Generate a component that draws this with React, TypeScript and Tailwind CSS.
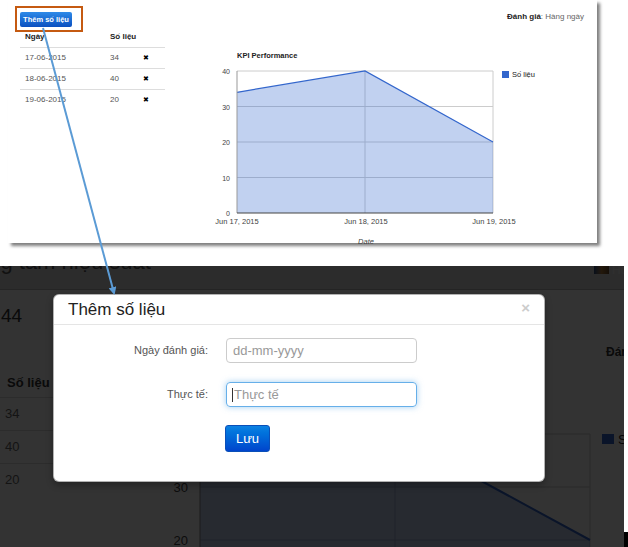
import React from "react";

const rows = [
  { date: "17-06-2015", value: 34 },
  { date: "18-06-2015", value: 40 },
  { date: "19-06-2015", value: 20 },
];

function KpiChart() {
  // origin sits at page (200,45)
  const gridY = [26, 61.5, 97, 132.5];
  return (
    <svg width="360" height="205" className="block" fontFamily="'Liberation Sans', Arial, sans-serif">
      <text x="37" y="13" fontSize="7.5" fontWeight="bold" fill="#222">KPI Performance</text>
      {gridY.map((y) => (
        <line key={y} x1="37" x2="293" y1={y} y2={y} stroke="#cccccc" strokeWidth="1" />
      ))}
      <line x1="165" x2="165" y1="26" y2="168" stroke="#cccccc" strokeWidth="1" />
      <line x1="293" x2="293" y1="26" y2="168" stroke="#cccccc" strokeWidth="1" />
      <polygon points="37,168 37,47.3 165,26 293,97 293,168" fill="#3366cc" fillOpacity="0.3" />
      <polyline points="37,47.3 165,26 293,97" fill="none" stroke="#3366cc" strokeWidth="1.2" />
      <line x1="37" x2="37" y1="26" y2="168" stroke="#999" strokeWidth="1" />
      <line x1="37" x2="293" y1="168" y2="168" stroke="#444" strokeWidth="1" />
      {[40, 30, 20, 10, 0].map((v, i) => (
        <text key={v} x="30" y={29 + i * 35.5} fontSize="7" fill="#444" textAnchor="end">
          {v}
        </text>
      ))}
      <text x="37" y="179" fontSize="7.5" fill="#444" textAnchor="middle">Jun 17, 2015</text>
      <text x="166" y="179" fontSize="7.5" fill="#444" textAnchor="middle">Jun 18, 2015</text>
      <text x="294" y="179" fontSize="7.5" fill="#444" textAnchor="middle">Jun 19, 2015</text>
      <text x="166" y="199" fontSize="7.5" fill="#444" fontStyle="italic" textAnchor="middle">Date</text>
      <rect x="302" y="26" width="7" height="7" fill="#3366cc" />
      <text x="312" y="32" fontSize="7.5" fill="#222">Số liệu</text>
    </svg>
  );
}

function BackChart() {
  // origin sits at dark-area (160,160)
  return (
    <svg width="470" height="121" className="block" fontFamily="'Liberation Sans', Arial, sans-serif">
      {[8, 61, 114].map((y) => (
        <line key={y} x1="40" x2="430" y1={y} y2={y} stroke="#cccccc" strokeWidth="1" />
      ))}
      <line x1="235" x2="235" y1="8" y2="130" stroke="#cccccc" strokeWidth="1" />
      <line x1="430" x2="430" y1="8" y2="130" stroke="#cccccc" strokeWidth="1" />
      <polygon points="40,130 40,39.8 235,8 430,114 430,130" fill="#3366cc" fillOpacity="0.3" />
      <polyline points="40,39.8 235,8 430,114" fill="none" stroke="#3366cc" strokeWidth="2" />
      <line x1="40" x2="40" y1="8" y2="130" stroke="#888" strokeWidth="1" />
      <text x="28" y="66" fontSize="13" fill="#444" textAnchor="end">30</text>
      <text x="28" y="119" fontSize="13" fill="#444" textAnchor="end">20</text>
      <rect x="442" y="8" width="12" height="10" fill="#3366cc" />
      <text x="458" y="18" fontSize="13" fill="#222">Số liệu</text>
    </svg>
  );
}

function Arrow() {
  return (
    <svg width="628" height="547" className="absolute left-0 top-0 z-50 pointer-events-none">
      <defs>
        <marker id="head" markerWidth="8" markerHeight="8" refX="6" refY="4" orient="auto" markerUnits="userSpaceOnUse">
          <path d="M0,0 L8,4 L0,8 z" fill="#5b9bd5" />
        </marker>
      </defs>
      <line x1="43" y1="28" x2="114" y2="293" stroke="#5b9bd5" strokeWidth="2" markerEnd="url(#head)" />
    </svg>
  );
}

function TopCard() {
  return (
    <div className="ml-[8px] w-[589px] h-[243px] bg-white shadow-[3px_3px_3px_rgba(0,0,0,0.5)] flex">
      <div className="w-[170px] pl-[7px] pt-[6px]">
        <div className="w-[68px] h-[26px] border-2 border-[#c55a11] pl-[3px] pt-[4px]">
          <div className="w-[52px] h-[15px] rounded-[2px] bg-gradient-to-b from-[#2f8ae8] to-[#0b4fc0] text-white text-[7.5px] font-bold flex items-center justify-center">
            Thêm số liệu
          </div>
        </div>
        <div className="ml-[5px] w-[145px] text-[8px]">
          <div className="h-[15px] flex leading-[10px] font-bold text-[#222]">
            <span className="w-[90px] pl-[5px]">Ngày</span>
            <span>Số liệu</span>
          </div>
          {rows.map((r) => (
            <div key={r.date} className="h-[21px] border-t border-[#dddddd] flex items-center text-[#555]">
              <span className="w-[90px] pl-[5px]">{r.date}</span>
              <span className="w-[33px]">{r.value}</span>
              <span className="text-[7px] text-black">✖</span>
            </div>
          ))}
        </div>
      </div>
      <div className="flex-1 flex flex-col pt-[12px] pr-[13px]">
        <div className="h-[10px] leading-[10px] text-[8px] text-right text-[#666]">
          <span className="font-bold text-[#222]">Đánh giá</span>: Hàng ngày
        </div>
        <div className="ml-[22px] mt-[23px]">
          <KpiChart />
        </div>
      </div>
    </div>
  );
}

function ModalScreen() {
  return (
    <div className="relative w-[624px] h-[281px] overflow-hidden bg-white">
      <div className="h-[24px] bg-[#dcdcdc] border-b border-[#bbbbbb] overflow-hidden flex justify-between">
        <div className="ml-[-44px] mt-[-17px] text-[22px] leading-[26px] text-[#555] whitespace-nowrap">
          Trung tâm hiệu suất
        </div>
        <div className="flex gap-[3px] mr-[-10px]">
          <div className="w-[15px] h-[8px] bg-gradient-to-r from-[#2a4b80] via-[#b07a3a] to-[#6b4a2a]" />
          <span className="text-[12px] leading-[8px] text-[#eee]">Hoà</span>
        </div>
      </div>
      <div className="flex">
        <div className="w-[160px] shrink-0">
          <div className="mt-[14px] ml-[1px] h-[24px] text-[19px] leading-[24px] text-[#333]">44</div>
          <div className="mt-[41px] h-[28px] pl-[7px] flex items-center text-[13px] font-bold text-[#333]">Số liệu</div>
          {rows.map((r) => (
            <div key={r.date} className="h-[33px] border-t border-[#dddddd] pl-[5px] flex items-center text-[13px] text-[#666]">
              {r.value}
            </div>
          ))}
        </div>
        <div className="flex-1 flex flex-col">
          <div className="pt-[55px] pl-[446px] h-[14px] box-content leading-[14px] text-[12px] font-bold text-[#333] whitespace-nowrap">
            Đánh giá
          </div>
          <div className="mt-[67px]">
            <BackChart />
          </div>
        </div>
      </div>

      <div className="absolute inset-0 bg-black/80" />

      <div className="absolute left-[53px] top-[28px] w-[492px] h-[188px] bg-white rounded-[6px] border border-black/30 shadow-[0_3px_7px_rgba(0,0,0,0.3)]">
        <div className="h-[30px] border-b border-[#e5e5e5] flex items-center justify-between pl-[14px] pr-[14px]">
          <span className="text-[17px] text-[#222] leading-[20px]">Thêm số liệu</span>
          <span className="text-[15px] font-bold text-[#cccccc] leading-[16px] mt-[-3px]">×</span>
        </div>
        <div className="pt-[13px]">
          <div className="flex items-center gap-[18px]">
            <span className="w-[154px] text-right text-[11px] text-[#555]">Ngày đánh giá:</span>
            <div className="w-[191px] h-[25px] border border-[#cccccc] rounded-[4px] pl-[6px] flex items-center text-[13px] text-[#999]">
              dd-mm-yyyy
            </div>
          </div>
          <div className="flex items-center gap-[18px] mt-[19px]">
            <span className="w-[154px] text-right text-[11px] text-[#555]">Thực tế:</span>
            <div className="w-[191px] h-[25px] border border-[#66afe9] rounded-[4px] pl-[5px] flex items-center text-[13px] text-[#999] shadow-[0_0_6px_rgba(102,175,233,0.6)]">
              <span className="w-[1px] h-[14px] bg-[#333] mr-[1px]" />
              Thực tế
            </div>
          </div>
          <div className="mt-[18px] ml-[171px] w-[45px] h-[27px] rounded-[3px] border border-[#0a4fb8] bg-gradient-to-b from-[#0d82e2] to-[#0044cc] text-white text-[13px] flex items-center justify-center">
            Lưu
          </div>
        </div>
      </div>
    </div>
  );
}

export default function App() {
  return (
    <div className="relative w-[628px] h-[547px] overflow-hidden bg-white font-['Liberation_Sans',Arial,sans-serif]">
      <TopCard />
      <div className="mt-[23px] flex">
        <ModalScreen />
        <div className="w-[4px] h-[281px] flex items-end">
          <div className="w-[4px] h-[15px] bg-black" />
        </div>
      </div>
      <Arrow />
    </div>
  );
}
